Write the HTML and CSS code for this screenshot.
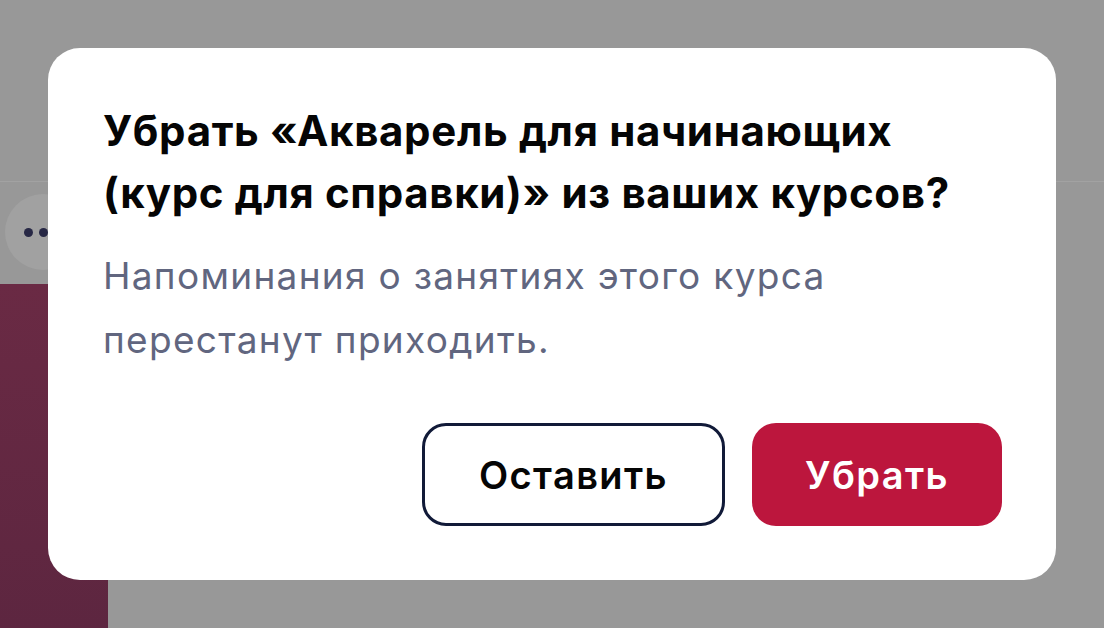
FILE: index.html
```html
<!DOCTYPE html>
<html lang="ru">
<head>
<meta charset="utf-8">
<title>Убрать курс</title>
<link rel="stylesheet" href="styles.css">
</head>
<body>
<div class="page">
  <div class="topbar"></div>
  <div class="actions">
    <button class="more" aria-label="Ещё"><span class="dot"></span><span class="dot"></span><span class="dot"></span></button>
  </div>
  <div class="course-card"></div>
</div>
<div class="overlay">
  <div class="modal" role="dialog">
    <h2 class="modal-title">Убрать «Акварель для начинающих (курс для справки)» из ваших курсов?</h2>
    <p class="modal-text">Напоминания о занятиях этого курса перестанут приходить.</p>
    <div class="modal-buttons">
      <button class="btn btn-keep">Оставить</button>
      <button class="btn btn-remove">Убрать</button>
    </div>
  </div>
</div>
</body>
</html>
```
FILE: styles.css
```css
* { box-sizing: border-box; }
html, body {
  margin: 0;
  padding: 0;
  width: 1104px;
  height: 628px;
  overflow: hidden;
  background: #989898;
  font-family: Inter, "Noto Sans", sans-serif;
}
.page {
  display: flex;
  flex-direction: column;
  height: 628px;
}
.topbar {
  height: 182px;
  border-bottom: 1px solid #a2a2a2;
}
.actions {
  display: flex;
  padding: 12px 0 14px 5px;
}
.more {
  width: 76px;
  height: 76px;
  border-radius: 50%;
  border: none;
  background: #a1a1a1;
  display: flex;
  align-items: center;
  justify-content: center;
  gap: 6px;
  padding: 0;
}
.dot {
  width: 9px;
  height: 9px;
  border-radius: 50%;
  background: #272845;
}
.course-card {
  flex: 1;
  width: 108px;
  background: linear-gradient(#6a2a44, #5d2640);
}
.overlay {
  position: fixed;
  inset: 0;
  display: flex;
  align-items: center;
  justify-content: center;
}
.modal {
  width: 1008px;
  height: 532px;
  background: #fff;
  border-radius: 32px;
  padding: 52px 54px 54px 55px;
  display: flex;
  flex-direction: column;
}
.modal-title {
  margin: 0;
  max-width: 860px;
  font-size: 42px;
  line-height: 62px;
  font-weight: 700;
  color: #050505;
  letter-spacing: 0.65px;
}
.modal-text {
  margin: 20px 0 0;
  max-width: 800px;
  font-size: 37px;
  line-height: 64px;
  font-weight: 400;
  color: #61667f;
  letter-spacing: 1.3px;
}
.modal-buttons {
  margin-top: auto;
  display: flex;
  justify-content: flex-end;
  gap: 27px;
}
.btn {
  height: 103px;
  border-radius: 24px;
  font-family: Inter, "Noto Sans", sans-serif;
  font-size: 38px;
  font-weight: 600;
  letter-spacing: 1.4px;
  cursor: pointer;
  padding: 0;
}
.btn-keep {
  width: 303px;
  background: #fff;
  border: 3px solid #111a38;
  color: #050505;
}
.btn-remove {
  width: 250px;
  background: #bc163d;
  border: none;
  color: #fff;
}
```
